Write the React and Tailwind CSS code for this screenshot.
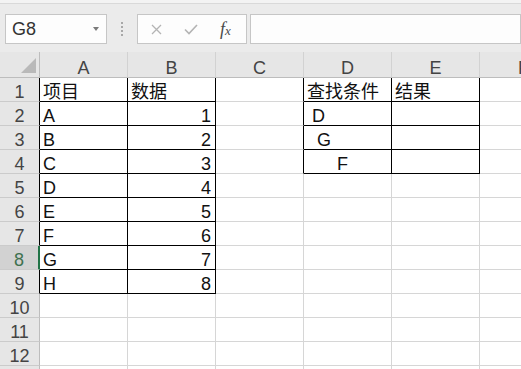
import React from "react";

const COLS = ["A", "B", "C", "D", "E", "F"];

const DATA = {
  1: { A: "项目", B: "数据", D: "查找条件", E: "结果" },
  2: { A: "A", B: "1", D: " D" },
  3: { A: "B", B: "2", D: "  G" },
  4: { A: "C", B: "3", D: "      F" },
  5: { A: "D", B: "4" },
  6: { A: "E", B: "5" },
  7: { A: "F", B: "6" },
  8: { A: "G", B: "7" },
  9: { A: "H", B: "8" },
};

const ROWS = [1, 2, 3, 4, 5, 6, 7, 8, 9, 10, 11, 12, 13];

const font = "font-['Liberation_Sans','Noto_Sans_CJK_SC',sans-serif]";

const Toolbar = () => (
  <div className="h-[52px] bg-[#ebebeb] flex flex-col">
    <div className="h-[4px] bg-[#f3f3f3] border-b border-[#d9d9d9]"></div>
    <div className="flex items-start pt-[10px]">
      {/* Name box */}
      <div className="ml-[5px] w-[102px] h-[30px] border border-[#c6c6c6] bg-[#fdfdfd] flex items-center justify-between pl-[6px] pr-[7px]">
        <span className="text-[18px] leading-none text-[#333]">G8</span>
        <span className="w-0 h-0 border-l-[3px] border-r-[3px] border-t-[4px] border-l-transparent border-r-transparent border-t-[#7a7a7a]"></span>
      </div>

      {/* grip dots */}
      <div className="w-[30px] h-[30px] flex flex-col items-center justify-center gap-[2px]">
        <span className="w-[2px] h-[2px] bg-[#a8a8a8]"></span>
        <span className="w-[2px] h-[2px] bg-[#a8a8a8]"></span>
        <span className="w-[2px] h-[2px] bg-[#a8a8a8]"></span>
        <span className="w-[2px] h-[2px] bg-[#a8a8a8]"></span>
      </div>

      {/* Cancel / Enter / fx */}
      <div className="w-[110px] h-[30px] border border-[#c6c6c6] bg-[#fdfdfd] flex items-center">
        <svg className="ml-[13px]" width="11" height="11" viewBox="0 0 11 11">
          <path d="M1 1 L10 10 M10 1 L1 10" stroke="#b4b4b4" strokeWidth="1.3" fill="none" />
        </svg>
        <svg className="ml-[22px]" width="14" height="11" viewBox="0 0 14 11">
          <path d="M1 5.5 L5 9.5 L13 1" stroke="#b4b4b4" strokeWidth="1.6" fill="none" />
        </svg>
        <span className="ml-[22px] font-['Liberation_Serif',serif] italic text-[#4a4a4a] text-[18px] leading-none">
          f<span className="text-[13px]">x</span>
        </span>
      </div>

      {/* Formula input */}
      <div className="ml-[3px] flex-1 h-[30px] border border-[#c6c6c6] bg-[#fdfdfd]"></div>
    </div>
  </div>
);

const HeaderRow = () => (
  <div className="grid grid-cols-[40px_88px_88px_88px_88px_88px_88px] h-[26px] bg-[#e6e6e6]">
    <div className="relative border-r border-b border-[#bdbdbd]">
      <svg className="absolute left-0 top-0" width="40" height="25" viewBox="0 0 40 25">
        <path d="M36 6 L36 21 L21 21 Z" fill="#b9b9b9" />
      </svg>
    </div>
    {COLS.map((c) => (
      <div
        key={c}
        className="border-r border-r-[#d2d2d2] border-b border-b-[#bdbdbd] flex items-end justify-center text-[18px] leading-none text-[#444]"
      >
        {c}
      </div>
    ))}
  </div>
);

const Row = ({ r }) => {
  const selected = r === 8;
  const inTableRows = r >= 1 && r <= 9;
  let headerRight = "border-r border-r-[#bdbdbd]";
  if (inTableRows) headerRight = "border-r border-r-black";
  if (selected) headerRight = "border-r-2 border-r-[#217346]";

  return (
    <div className="grid grid-cols-[40px_88px_88px_88px_88px_88px_88px] h-[24px] shrink-0">
      <div
        className={`${headerRight} border-b border-b-[#cbcbcb] flex items-end justify-center text-[18px] leading-none ${
          selected ? "bg-[#d2d2d2] text-[#3f7150]" : "bg-[#e6e6e6] text-[#444]"
        }`}
      >
        {r < 13 ? r : ""}
      </div>
      {COLS.map((c, i) => {
        const inA = r >= 1 && r <= 9 && i <= 1;
        const inD = r >= 1 && r <= 4 && (i === 3 || i === 4);
        const rightBlack = inA || inD || (i === 2 && r >= 1 && r <= 4);
        const bottomBlack = inA || inD;
        const value = DATA[r] ? DATA[r][c] : undefined;
        const isNumber = value !== undefined && /^\d+$/.test(value);
        return (
          <div
            key={c}
            className={`bg-white border-r border-b ${rightBlack ? "border-r-black" : "border-r-[#d6d6d6]"} ${
              bottomBlack ? "border-b-black" : "border-b-[#d6d6d6]"
            } flex items-end text-[18px] leading-none text-[#111] whitespace-pre overflow-hidden ${
              isNumber ? "justify-end pr-[4px]" : "pl-[3px]"
            }`}
          >
            {value}
          </div>
        );
      })}
    </div>
  );
};

export default function App() {
  return (
    <div className={`w-[521px] h-[369px] overflow-hidden bg-white ${font}`}>
      <Toolbar />
      <HeaderRow />
      {ROWS.map((r) => (
        <Row key={r} r={r} />
      ))}
    </div>
  );
}
